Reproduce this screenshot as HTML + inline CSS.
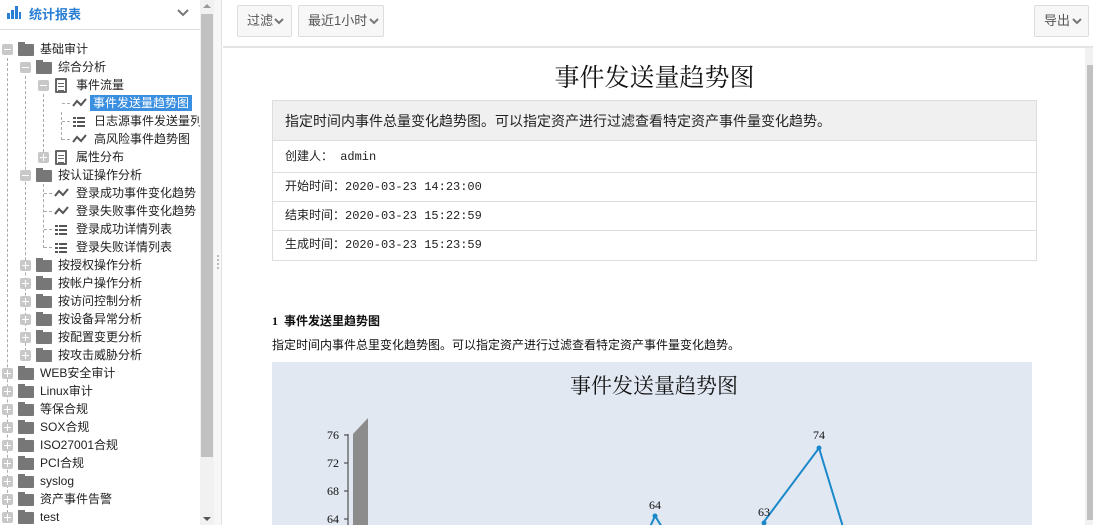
<!DOCTYPE html>
<html><head><meta charset="utf-8"><style>
*{margin:0;padding:0;box-sizing:border-box}
body{width:1093px;height:525px;overflow:hidden;background:#fff;font-family:"Liberation Sans","Noto Sans CJK SC",sans-serif;position:relative;font-size:12px;color:#333}
.a{position:absolute}
.row{position:absolute;height:18px;line-height:18px;font-size:12px;color:#222;white-space:nowrap}
.pm{position:absolute;width:11px;height:11px;background:#c8c8c8;border-radius:2px;top:4px}
.pm:before{content:"";position:absolute;left:2px;top:5px;width:7px;height:1px;background:#fff}
.pm.p:after{content:"";position:absolute;left:5px;top:2px;width:1px;height:7px;background:#fff}
.fd{position:absolute;width:16px;height:12px;top:4px;background:#777;border-radius:1px}
.fd:before{content:"";position:absolute;left:0;top:-2px;width:7px;height:3px;background:#777}
.dc{position:absolute;width:12px;height:15px;top:2px;border:2px solid #666;border-radius:1px;background:#fff}
.dc:before{content:"";position:absolute;left:1px;top:3px;width:6px;height:6px;border-top:1px solid #666;border-bottom:1px solid #666}
.dc:after{content:"";position:absolute;left:1px;top:6px;width:6px;height:1px;background:#666}
.ls{position:absolute;width:12px;height:10px;top:5px;background:repeating-linear-gradient(#555 0 2px,transparent 2px 4px)}
.ls:before{content:"";position:absolute;left:3px;top:0;width:1px;height:10px;background:#fff}
.tx{position:absolute}
.vl{position:absolute;border-left:1px dashed #aaa}
.hl{position:absolute;border-top:1px dashed #aaa;width:8px}
.btn{position:absolute;top:5px;height:32px;border:1px solid #ddd;border-radius:2px;background:#f7f7f7;font-size:13px;color:#555;line-height:30px;padding-left:9px}
.cell{position:absolute;left:272px;width:765px;border:1px solid #ddd;font-family:"Liberation Mono","Noto Sans CJK SC",monospace;font-size:12px;color:#222;padding-left:12px}
</style></head><body>
<div class="a" style="left:0;top:0;width:200px;height:30px;border-bottom:1px solid #ddd"></div>
<svg class="a" style="left:7px;top:6px" width="14" height="13"><rect x="0" y="7" width="3" height="6" fill="#2a7fd4"/><rect x="4" y="4" width="3" height="9" fill="#2a7fd4"/><rect x="8" y="0" width="3" height="13" fill="#2a7fd4"/><rect x="12" y="6" width="2" height="7" fill="#2a7fd4"/></svg>
<div class="a" style="left:29px;top:4px;font-size:13px;color:#2a7fd4;font-weight:bold">统计报表</div>
<svg class="a" style="left:177px;top:9px" width="12" height="8"><path d="M1 1l5 5 5-5" stroke="#777" stroke-width="2" fill="none"/></svg>
<div class="vl" style="left:7px;top:58px;height:460px"></div>
<div class="vl" style="left:25px;top:76px;height:280px"></div>
<div class="vl" style="left:43px;top:94px;height:63px"></div>
<div class="vl" style="left:61px;top:112px;height:28px"></div>
<div class="vl" style="left:43px;top:184px;height:64px"></div>
<div class="hl" style="left:62px;top:103px"></div><div class="hl" style="left:62px;top:121px"></div><div class="hl" style="left:62px;top:139px"></div>
<div class="hl" style="left:44px;top:193px"></div><div class="hl" style="left:44px;top:211px"></div><div class="hl" style="left:44px;top:229px"></div><div class="hl" style="left:44px;top:247px"></div>

<div class="row" style="top:40px;left:0"><i class="pm" style="left:2px"></i><i class="fd" style="left:18px"></i><span class="tx" style="left:40px">基础审计</span></div>
<div class="row" style="top:58px;left:0"><i class="pm" style="left:20px"></i><i class="fd" style="left:36px"></i><span class="tx" style="left:58px">综合分析</span></div>
<div class="row" style="top:76px;left:0"><i class="pm" style="left:38px"></i><i class="dc" style="left:55px"></i><span class="tx" style="left:76px">事件流量</span></div>
<div class="row" style="top:94px;left:0;width:200px"><svg class="a" style="left:72px;top:4px" width="16" height="10"><path d="M1 8l4-5 4 4 5-6" stroke="#555" stroke-width="2" fill="none"/></svg><span class="tx" style="left:90px;background:#3b8fe0;color:#fff;padding:0 3px;top:1px;line-height:16px">事件发送量趋势图</span></div>
<div class="row" style="top:112px;left:0;width:200px;overflow:hidden"><i class="ls" style="left:73px"></i><span class="tx" style="left:94px">日志源事件发送量列</span></div>
<div class="row" style="top:130px;left:0"><svg class="a" style="left:72px;top:4px" width="16" height="10"><path d="M1 8l4-5 4 4 5-6" stroke="#555" stroke-width="2" fill="none"/></svg><span class="tx" style="left:94px">高风险事件趋势图</span></div>
<div class="row" style="top:148px;left:0"><i class="pm p" style="left:38px"></i><i class="dc" style="left:55px"></i><span class="tx" style="left:76px">属性分布</span></div>
<div class="row" style="top:166px;left:0"><i class="pm" style="left:20px"></i><i class="fd" style="left:36px"></i><span class="tx" style="left:58px">按认证操作分析</span></div>
<div class="row" style="top:184px;left:0;width:200px;overflow:hidden"><svg class="a" style="left:54px;top:4px" width="16" height="10"><path d="M1 8l4-5 4 4 5-6" stroke="#555" stroke-width="2" fill="none"/></svg><span class="tx" style="left:76px">登录成功事件变化趋势</span></div>
<div class="row" style="top:202px;left:0;width:200px;overflow:hidden"><svg class="a" style="left:54px;top:4px" width="16" height="10"><path d="M1 8l4-5 4 4 5-6" stroke="#555" stroke-width="2" fill="none"/></svg><span class="tx" style="left:76px">登录失败事件变化趋势</span></div>
<div class="row" style="top:220px;left:0"><i class="ls" style="left:55px"></i><span class="tx" style="left:76px">登录成功详情列表</span></div>
<div class="row" style="top:238px;left:0"><i class="ls" style="left:55px"></i><span class="tx" style="left:76px">登录失败详情列表</span></div>
<div class="row" style="top:256px;left:0"><i class="pm p" style="left:20px"></i><i class="fd" style="left:36px"></i><span class="tx" style="left:58px">按授权操作分析</span></div>
<div class="row" style="top:274px;left:0"><i class="pm p" style="left:20px"></i><i class="fd" style="left:36px"></i><span class="tx" style="left:58px">按帐户操作分析</span></div>
<div class="row" style="top:292px;left:0"><i class="pm p" style="left:20px"></i><i class="fd" style="left:36px"></i><span class="tx" style="left:58px">按访问控制分析</span></div>
<div class="row" style="top:310px;left:0"><i class="pm p" style="left:20px"></i><i class="fd" style="left:36px"></i><span class="tx" style="left:58px">按设备异常分析</span></div>
<div class="row" style="top:328px;left:0"><i class="pm p" style="left:20px"></i><i class="fd" style="left:36px"></i><span class="tx" style="left:58px">按配置变更分析</span></div>
<div class="row" style="top:346px;left:0"><i class="pm p" style="left:20px"></i><i class="fd" style="left:36px"></i><span class="tx" style="left:58px">按攻击威胁分析</span></div>
<div class="row" style="top:364px;left:0"><i class="pm p" style="left:2px"></i><i class="fd" style="left:18px"></i><span class="tx" style="left:40px">WEB安全审计</span></div>
<div class="row" style="top:382px;left:0"><i class="pm p" style="left:2px"></i><i class="fd" style="left:18px"></i><span class="tx" style="left:40px">Linux审计</span></div>
<div class="row" style="top:400px;left:0"><i class="pm p" style="left:2px"></i><i class="fd" style="left:18px"></i><span class="tx" style="left:40px">等保合规</span></div>
<div class="row" style="top:418px;left:0"><i class="pm p" style="left:2px"></i><i class="fd" style="left:18px"></i><span class="tx" style="left:40px">SOX合规</span></div>
<div class="row" style="top:436px;left:0"><i class="pm p" style="left:2px"></i><i class="fd" style="left:18px"></i><span class="tx" style="left:40px">ISO27001合规</span></div>
<div class="row" style="top:454px;left:0"><i class="pm p" style="left:2px"></i><i class="fd" style="left:18px"></i><span class="tx" style="left:40px">PCI合规</span></div>
<div class="row" style="top:472px;left:0"><i class="pm p" style="left:2px"></i><i class="fd" style="left:18px"></i><span class="tx" style="left:40px">syslog</span></div>
<div class="row" style="top:490px;left:0"><i class="pm p" style="left:2px"></i><i class="fd" style="left:18px"></i><span class="tx" style="left:40px">资产事件告警</span></div>
<div class="row" style="top:508px;left:0"><i class="pm p" style="left:2px"></i><i class="fd" style="left:18px"></i><span class="tx" style="left:40px">test</span></div>
<div class="a" style="left:200px;top:0;width:14px;height:525px;background:#f1f1f1"></div>
<div class="a" style="left:201px;top:14px;width:12px;height:443px;background:#c1c1c1"></div>
<div class="a" style="left:203px;top:4px;width:0;height:0;border:4px solid transparent;border-bottom-color:#999;border-top:0"></div>
<div class="a" style="left:203px;top:517px;width:0;height:0;border:4px solid transparent;border-top-color:#555;border-bottom:0"></div>
<div class="a" style="left:214px;top:0;width:8px;height:525px;background:#f7f7f7;border-right:1px solid #e2e2e2"></div>
<div class="a" style="left:217px;top:255px;width:2px;height:14px;background:repeating-linear-gradient(#bbb 0 2px,transparent 2px 4px)"></div>
<div class="a" style="left:223px;top:46px;width:870px;height:2px;background:#e4e4e4"></div>
<div class="btn" style="left:237px;width:55px">过滤<svg style="position:absolute;left:36px;top:12px" width="10" height="7"><path d="M1 1l4 4 4-4" stroke="#777" stroke-width="2" fill="none"/></svg></div>
<div class="btn" style="left:298px;width:86px">最近1小时<svg style="position:absolute;left:70px;top:12px" width="10" height="7"><path d="M1 1l4 4 4-4" stroke="#777" stroke-width="2" fill="none"/></svg></div>
<div class="btn" style="left:1034px;width:55px">导出<svg style="position:absolute;left:37px;top:12px" width="10" height="7"><path d="M1 1l4 4 4-4" stroke="#777" stroke-width="2" fill="none"/></svg></div>
<div class="a" style="left:1085px;top:48px;width:8px;height:477px;background:#f1f1f1"></div>
<div class="a" style="left:1087px;top:65px;width:6px;height:455px;background:#c1c1c1"></div>
<div class="a" style="left:272px;top:58px;width:765px;text-align:center;font-family:'Noto Serif CJK SC','Liberation Serif',serif;font-size:25px;color:#111">事件发送量趋势图</div>
<div class="cell" style="top:100px;height:41px;line-height:40px;background:#f0f0f0;font-family:'Liberation Sans','Noto Sans CJK SC',sans-serif;font-size:14px">指定时间内事件总量变化趋势图。可以指定资产进行过滤查看特定资产事件量变化趋势。</div>
<div class="cell" style="top:140px;height:33px;line-height:33px">创建人： admin</div>
<div class="cell" style="top:172px;height:30px;line-height:29px">开始时间：2020-03-23 14:23:00</div>
<div class="cell" style="top:201px;height:30px;line-height:29px">结束时间：2020-03-23 15:22:59</div>
<div class="cell" style="top:230px;height:31px;line-height:29px">生成时间：2020-03-23 15:23:59</div>
<div class="a" style="left:272px;top:312px;font-size:12px;font-weight:bold;color:#111;font-family:'Liberation Serif','Noto Sans CJK SC',serif">1&nbsp; 事件发送里趋势图</div>
<div class="a" style="left:272px;top:336px;font-size:12px;color:#111">指定时间内事件总里变化趋势图。可以指定资产进行过滤查看特定资产事件量变化趋势。</div>
<svg class="a" style="left:272px;top:362px" width="760" height="163">
<rect width="760" height="163" fill="#e1e8f2"/>
<text x="382" y="31" text-anchor="middle" font-family="Noto Serif CJK SC,Liberation Serif,serif" font-size="21" fill="#111">事件发送量趋势图</text>
<polygon points="81,72 96,56 96,163 81,163" fill="#8c8c8c"/>
<line x1="76" y1="72" x2="76" y2="163" stroke="#333"/>
<g font-family="Liberation Serif,serif" font-size="12" fill="#111" text-anchor="end">
<text x="67" y="77">76</text><text x="67" y="105">72</text><text x="67" y="133">68</text><text x="67" y="161">64</text></g>
<g stroke="#333"><line x1="72" y1="73" x2="76" y2="73"/><line x1="72" y1="101" x2="76" y2="101"/><line x1="72" y1="129" x2="76" y2="129"/><line x1="72" y1="157" x2="76" y2="157"/></g>
<polyline points="378,165 383,154 390,165" fill="none" stroke="#1a88c9" stroke-width="2"/>
<polyline points="491,161 547,86 571,165" fill="none" stroke="#1a88c9" stroke-width="2"/>
<circle cx="383" cy="154" r="2.5" fill="#1a88c9"/><circle cx="492" cy="161" r="2.5" fill="#1a88c9"/><circle cx="547" cy="86" r="2.5" fill="#1a88c9"/>
<g font-family="Liberation Serif,serif" font-size="12" fill="#111" text-anchor="middle"><text x="383" y="147">64</text><text x="492" y="154">63</text><text x="547" y="77">74</text></g>
</svg>
</body></html>
